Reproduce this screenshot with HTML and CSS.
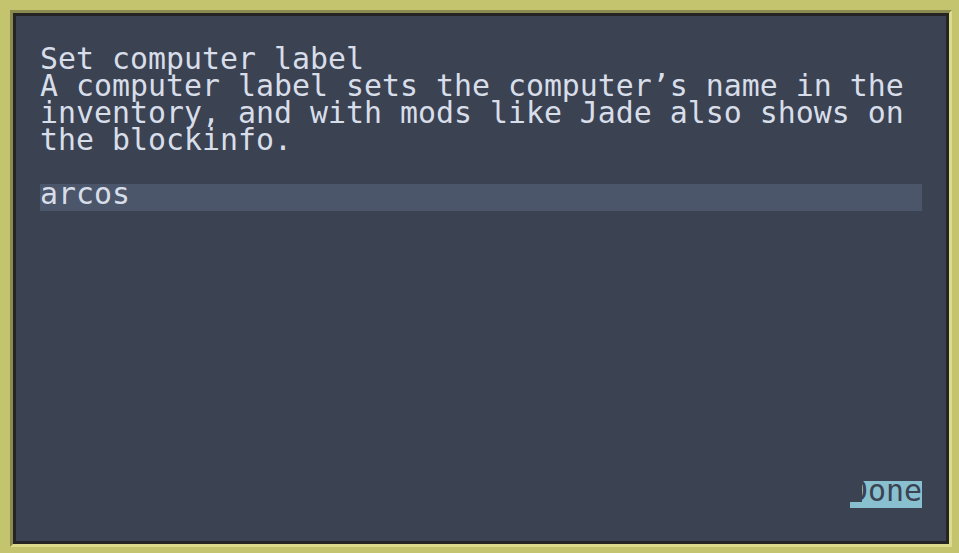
FILE: index.html
```html
<!DOCTYPE html>
<html lang="en">
<head>
<meta charset="utf-8">
<title>Set computer label</title>
<link rel="stylesheet" href="styles.css">
</head>
<body>
  <div class="frame">
    <div class="panel">
      <div class="text">
        <div class="title">Set computer label</div>
        <div class="desc">A computer label sets the computer’s name in the<br>inventory, and with mods like Jade also shows on<br>the blockinfo.</div>
      </div>
      <div class="input">arcos</div>
      <div class="footer">
        <span class="done">Done</span>
      </div>
    </div>
  </div>
</body>
</html>
```
FILE: styles.css
```css
html, body {
  margin: 0;
  padding: 0;
}
body {
  width: 959px;
  height: 553px;
  background: #c5c46e;
  overflow: hidden;
  font-family: "DejaVu Sans Mono", "Liberation Mono", monospace;
  font-size: 29.9px;
  color: #d8dee9;
}
.frame {
  margin: 10px 7px 6px 10px;
  height: 531px;
  border-style: solid;
  border-width: 3px;
  border-color: #8b8a4e #dcdb8b #dcdb8b #8b8a4e;
}
.panel {
  box-sizing: border-box;
  height: 531px;
  border: 3px solid #242424;
  background: #3b4252;
  padding: 29px 24px 33px 24px;
  display: flex;
  flex-direction: column;
}
.text {
  line-height: 27px;
  white-space: nowrap;
}
.input {
  margin-top: 31px;
  height: 27px;
  box-sizing: border-box;
  line-height: 20px;
  padding-bottom: 7px;
  background: #4c566a;
  white-space: nowrap;
}
.footer {
  margin-top: auto;
  display: flex;
  justify-content: flex-end;
}
.done {
  position: relative;
  display: block;
  width: 72px;
  height: 27px;
  box-sizing: border-box;
  line-height: 20px;
  padding-bottom: 7px;
  background: #88c0d0;
  color: #3b4252;
}
.done::before {
  content: "";
  position: absolute;
  left: 0;
  top: 0;
  width: 12px;
  height: 21px;
  background: #3b4252;
}
```
